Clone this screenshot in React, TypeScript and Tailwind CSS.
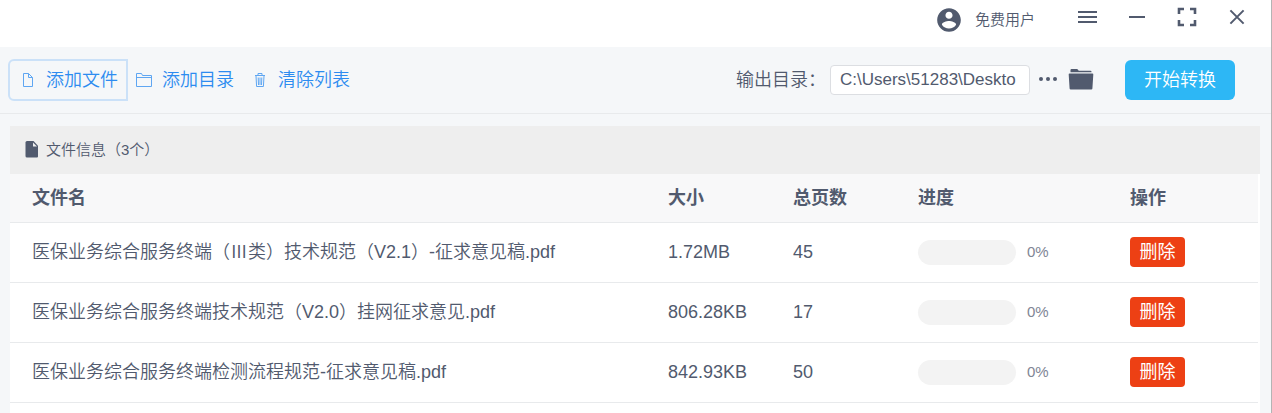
import type { ReactNode } from "react";

type FileItem = {
  name: string;
  size: string;
  pages: number;
  progress: number;
};

const files: FileItem[] = [
  { name: "医保业务综合服务终端（Ⅲ类）技术规范（V2.1）-征求意见稿.pdf", size: "1.72MB", pages: 45, progress: 0 },
  { name: "医保业务综合服务终端技术规范（V2.0）挂网征求意见.pdf", size: "806.28KB", pages: 17, progress: 0 },
  { name: "医保业务综合服务终端检测流程规范-征求意见稿.pdf", size: "842.93KB", pages: 50, progress: 0 },
];

const AccountIcon = () => (
  <svg width="26" height="26" viewBox="1 1 22 22" fill="currentColor" aria-hidden="true">
    <path d="M12 2C6.48 2 2 6.48 2 12s4.48 10 10 10 10-4.48 10-10S17.52 2 12 2zm0 3c1.66 0 3 1.34 3 3s-1.34 3-3 3-3-1.34-3-3 1.34-3 3-3zm0 14.2a7.2 7.2 0 0 1-6-3.22c.03-1.99 4-3.08 6-3.08 1.99 0 5.97 1.09 6 3.08a7.2 7.2 0 0 1-6 3.22z" />
  </svg>
);

const MenuIcon = () => (
  <svg width="20" height="20" viewBox="0 0 20 20" fill="currentColor" aria-hidden="true">
    <path d="M1 4h19v2H1zM1 9h19v2H1zM1 14h19v2H1z" />
  </svg>
);

const MinimizeIcon = () => (
  <svg width="20" height="20" viewBox="0 0 20 20" fill="currentColor" aria-hidden="true">
    <path d="M2 9h16v2H2z" />
  </svg>
);

const FullscreenIcon = () => (
  <svg width="20" height="20" viewBox="0 0 20 20" fill="none" stroke="currentColor" strokeWidth="2.6" aria-hidden="true">
    <path d="M2 7V2h5M13 2h5v5M18 13v5h-5M7 18H2v-5" />
  </svg>
);

const CloseIcon = () => (
  <svg width="20" height="20" viewBox="0 0 20 20" fill="none" stroke="currentColor" strokeWidth="2" aria-hidden="true">
    <path d="M3.400 3.400l13.200 13.200M16.600 3.400L3.400 16.600" />
  </svg>
);

const FileOutlineIcon = () => (
  <svg width="16" height="16" viewBox="0 0 16 16" fill="none" stroke="currentColor" aria-hidden="true">
    <path d="M3.5 1.5h5l4 4v9h-9zM8.5 1.5v4h4" />
  </svg>
);

const FolderOutlineIcon = () => (
  <svg width="16" height="16" viewBox="0 0 16 16" fill="none" stroke="currentColor" aria-hidden="true">
    <path d="M.5 14.5v-13h5l1 2h9v11zM.5 5.5h15" />
  </svg>
);

const TrashIcon = () => (
  <svg width="16" height="16" viewBox="0 0 16 16" fill="none" stroke="currentColor" aria-hidden="true">
    <path d="M3 3.500h10M6 3V1.500h4V3M4 4l.6 10.500h6.800L12 4M6.200 5.500l.3 7.500M8 5.500V13M9.800 5.500L9.500 13" />
  </svg>
);

const MoreIcon = () => (
  <svg width="20" height="20" viewBox="0 0 20 20" fill="currentColor" aria-hidden="true">
    <circle cx="3" cy="9" r="2" />
    <circle cx="10" cy="9" r="2" />
    <circle cx="17" cy="9" r="2" />
  </svg>
);

const FolderIcon = () => (
  <svg width="26" height="22" viewBox="0 0 26 22" fill="currentColor" aria-hidden="true">
    <path d="M2.5 3.2V1q0-1 1-1h5.300q.7 0 1.100.6l.8 1.200h11.800q1 0 1 1v.4z" />
    <path d="M1.600 4.500h22.800q1 0 .9 1l-.9 14q-.1 1-1.100 1H2.700q-1 0-1.100-1l-.9-14q-.1-1 .9-1z" />
  </svg>
);

const DocumentIcon = () => (
  <svg width="14" height="18" viewBox="0 0 14 18" aria-hidden="true">
    <path fill="currentColor" d="M2 0h6.500L13 4.800v10.700q0 1-1 1H2q-1.500 0-1.500-1.500V1.500Q.5 0 2 0z" />
    <path fill="#eee" d="M8 1.500v4h4z" />
  </svg>
);

type ToolButtonProps = {
  icon: ReactNode;
  className?: string;
  children: ReactNode;
};

const ToolButton = ({ icon, className = "", children }: ToolButtonProps) => (
  <button type="button" className={`flex h-[42px] items-center gap-2.5 text-[#2d8cf0] ${className}`}>
    <span className="opacity-75">{icon}</span>
    <span>{children}</span>
  </button>
);

const TitleBar = () => (
  <header className="flex h-[47px] items-start justify-end bg-white pt-[7px] pr-6">
    <div className="mr-[42px] flex items-center gap-[13px] text-[15px] leading-[26px]">
      <AccountIcon />
      <span>免费用户</span>
    </div>
    <div className="flex gap-[30px]">
      <button type="button" aria-label="菜单"><MenuIcon /></button>
      <button type="button" aria-label="最小化"><MinimizeIcon /></button>
      <button type="button" aria-label="全屏"><FullscreenIcon /></button>
      <button type="button" aria-label="关闭"><CloseIcon /></button>
    </div>
  </header>
);

const Toolbar = () => (
  <div className="flex h-[67px] items-center justify-between border-b border-[#e8eaec] pr-9 pl-2">
    <div className="flex items-center">
      <ToolButton icon={<FileOutlineIcon />} className="rounded-l-md border-2 border-[#cbe1f8] pr-2 pl-2.5">
        添加文件
      </ToolButton>
      <ToolButton icon={<FolderOutlineIcon />} className="px-2">添加目录</ToolButton>
      <ToolButton icon={<TrashIcon />} className="px-2.5">清除列表</ToolButton>
    </div>
    <div className="flex items-center">
      <label htmlFor="output">输出目录：</label>
      <input
        id="output"
        type="text"
        defaultValue="C:\Users\51283\Deskto"
        className="ml-1 h-[30px] w-[200px] rounded border border-[#dcdee2] bg-white px-[9px] text-[17px]"
      />
      <button type="button" aria-label="选择目录" className="ml-2"><MoreIcon /></button>
      <button type="button" aria-label="打开目录" className="ml-2.5"><FolderIcon /></button>
      <button type="button" className="ml-[31px] h-10 w-[110px] rounded-md bg-[#2db7f5] text-white">
        开始转换
      </button>
    </div>
  </div>
);

const FileRow = ({ file }: { file: FileItem }) => (
  <tr className="h-[60px] border-b border-[#e8eaec]">
    <td className="pl-[22px]">{file.name}</td>
    <td className="px-3">{file.size}</td>
    <td className="px-3">{file.pages}</td>
    <td className="px-3">
      <div className="flex items-center gap-[11px]">
        <div className="h-[25px] w-[98px] overflow-hidden rounded-full bg-[#f3f3f3]">
          <div className="h-full bg-[#2db7f5]" style={{ width: `${file.progress}%` }} />
        </div>
        <span className="text-[15px] text-[#808695]">{file.progress}%</span>
      </div>
    </td>
    <td className="px-3">
      <button type="button" className="block h-[30px] w-[55px] rounded bg-[#ed4014] font-normal text-white">
        删除
      </button>
    </td>
  </tr>
);

const FilePanel = () => (
  <section className="mt-3 mr-[11px] ml-2.5 flex-1 bg-white">
    <h2 className="flex h-12 items-center gap-[7px] bg-[#eee] pl-[15px] text-[15px]">
      <DocumentIcon />
      文件信息（{files.length}个）
    </h2>
    <div className="pr-0.5">
      <table className="w-full table-fixed border-collapse text-left">
        <colgroup>
          <col />
          <col className="w-[125px]" />
          <col className="w-[125px]" />
          <col className="w-[212px]" />
          <col className="w-[140px]" />
        </colgroup>
        <thead>
          <tr className="h-12 border-b border-[#e8eaec] bg-[#f8f8f9]">
            <th className="pl-[22px]">文件名</th>
            <th className="px-3">大小</th>
            <th className="px-3">总页数</th>
            <th className="px-3">进度</th>
            <th className="px-3">操作</th>
          </tr>
        </thead>
        <tbody>
          {files.map((file) => (
            <FileRow key={file.name} file={file} />
          ))}
        </tbody>
      </table>
    </div>
  </section>
);

export default function App() {
  return (
    <div className="flex min-h-screen flex-col border-r border-[#b4b4b4] bg-[#f5f7f9] font-['Liberation_Sans','Noto_Sans_CJK_SC',sans-serif] text-[18px] leading-6 font-[350] text-[#515a6e]">
      <TitleBar />
      <Toolbar />
      <FilePanel />
    </div>
  );
}
